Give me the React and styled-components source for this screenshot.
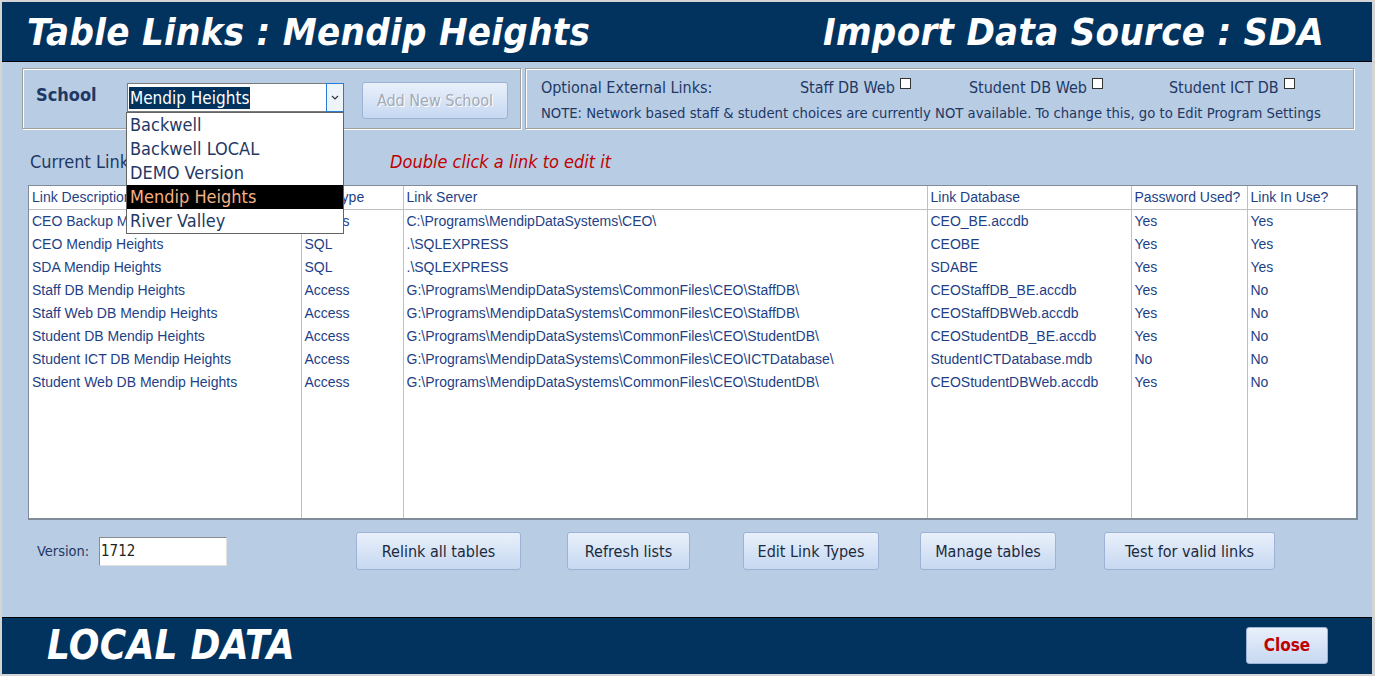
import React from "react";
import styled, { createGlobalStyle } from "styled-components";

const Global = createGlobalStyle`
  html, body { margin: 0; padding: 0; background: #ffffff; }
  * { box-sizing: border-box; }
`;

const NAVY = "#02335f";
const TEXT = "#1f3864";
const UI = `"DejaVu Sans Condensed", "DejaVu Sans", sans-serif`;
const ARIAL = `"Liberation Sans", Arial, sans-serif`;

const Window = styled.div`
  width: 1375px;
  height: 676px;
  border: 2px solid #d4d4d4;
  border-right-width: 3px;
  display: flex;
  flex-direction: column;
  background: #b8cce4;
  font-family: ${UI};
  overflow: hidden;
`;

const Band = styled.div`
  background: ${NAVY};
  height: ${(p) => p.$h}px;
  display: flex;
  align-items: center;
  justify-content: space-between;
  padding: ${(p) => p.$pad};
  border-bottom: ${(p) => (p.$top ? "1px solid #000" : "none")};
  border-top: ${(p) => (p.$top ? "none" : "1px solid #000")};
  flex-shrink: 0;
`;

const BigTitle = styled.h1`
  margin: 0;
  color: #fff;
  font-family: ${UI};
  font-weight: bold;
  font-style: italic;
  font-size: ${(p) => p.$size || 38}px;
  letter-spacing: 0.3px;
  white-space: nowrap;
`;

const Body = styled.div`
  flex: 1;
  display: flex;
  flex-direction: column;
  padding: 6px 18px 0 20px;
`;

const TopRow = styled.div`
  display: flex;
  gap: 4px;
  height: 61px;
`;

const Panel = styled.div`
  position: relative;
  width: ${(p) => p.$w}px;
  border: 1px solid #a0a0a0;
  box-shadow: inset 1px 1px 0 #ffffff, 1px 1px 0 #ffffff;
  display: flex;
  flex-direction: ${(p) => (p.$col ? "column" : "row")};
  padding: ${(p) => p.$pad};
`;

const SchoolLabel = styled.span`
  font-weight: bold;
  font-size: 18px;
  color: ${TEXT};
  width: 91px;
  padding-top: 15px;
`;

const Combo = styled.div`
  position: relative;
  width: 217px;
  height: 29px;
  margin-top: 14px;
  background: #fff;
  border: 1px solid #7a7a7a;
  display: flex;
  align-items: center;
  padding-left: 1px;
`;

const ComboValue = styled.span`
  background: ${NAVY};
  color: #fff;
  font-size: 17px;
  line-height: 22px;
  padding: 0 1px;
`;

const ComboButton = styled.div`
  position: absolute;
  right: -1px;
  top: -1px;
  width: 18px;
  height: 29px;
  border: 1px solid #2b7bd4;
  background: #eef4fb;
  display: flex;
  align-items: center;
  justify-content: center;
`;

const DropList = styled.ul`
  position: absolute;
  left: 103px;
  top: 43px;
  width: 218px;
  margin: 0;
  padding: 0;
  list-style: none;
  background: #fff;
  border: 1px solid #646464;
  z-index: 5;
`;

const DropItem = styled.li`
  height: 24px;
  line-height: 24px;
  padding-left: 3px;
  font-size: 18px;
  font-family: ${UI};
  color: ${(p) => (p.$sel ? "#f4b183" : TEXT)};
  background: ${(p) => (p.$sel ? "#000" : "transparent")};
`;

const Button = styled.button`
  font-family: ${UI};
  font-size: ${(p) => p.$size || 16}px;
  font-weight: ${(p) => (p.$bold ? "bold" : "normal")};
  color: ${(p) => p.$color || "#1b2a3d"};
  width: ${(p) => p.$w}px;
  height: ${(p) => p.$h || 38}px;
  border: 1px solid #9db3d6;
  border-radius: 3px;
  background: linear-gradient(#e9f0fb, #c6d8f1);
  padding: 0;
  margin-top: ${(p) => p.$mt || 0}px;
  cursor: pointer;
  &:disabled {
    color: #a4aab3;
    text-shadow: 1px 1px 0 #fff;
    cursor: default;
  }
`;

const OptRow = styled.div`
  display: flex;
  align-items: center;
  height: 22px;
  font-size: 16px;
  color: ${TEXT};
`;

const OptLabel = styled.span`
  width: ${(p) => p.$w}px;
  display: flex;
  align-items: center;
`;

const Check = styled.span`
  display: inline-block;
  width: 11px;
  height: 11px;
  background: #fff;
  border: 1px solid #333;
  margin-left: 5px;
  margin-top: -8px;
`;

const Note = styled.div`
  font-size: 14.7px;
  color: ${TEXT};
  margin-top: 6px;
  white-space: nowrap;
`;

const CaptionRow = styled.div`
  display: flex;
  align-items: baseline;
  margin: 22px 0 0 8px;
  height: 34px;
`;

const Caption = styled.span`
  font-size: 18px;
  color: ${TEXT};
  width: 360px;
`;

const Hint = styled.span`
  font-size: 18px;
  font-style: italic;
  color: #c00000;
`;

const TableBox = styled.div`
  margin-left: 6px;
  width: 1330px;
  height: 335px;
  background: #fff;
  border: 1px solid #7f8b99;
  border-right-width: 2px;
  border-bottom-width: 2px;
  overflow: hidden;
`;

const Grid = styled.table`
  width: 100%;
  height: 100%;
  border-collapse: collapse;
  table-layout: fixed;
  font-family: ${ARIAL};
  font-size: 14px;
  color: #1e3f86;
`;

const Th = styled.th`
  font-weight: normal;
  text-align: left;
  height: 23px;
  padding: 0 3px;
  border-left: 1px solid #c0c0c0;
  border-bottom: 1px solid #c0c0c0;
  white-space: nowrap;
  overflow: hidden;
  &:first-child { border-left: none; }
`;

const Td = styled.td`
  height: 23px;
  padding: 0 3px;
  border-left: 1px solid #c0c0c0;
  white-space: nowrap;
  overflow: hidden;
  vertical-align: middle;
  &:first-child { border-left: none; }
`;

const Filler = styled.td`
  border-left: 1px solid #c0c0c0;
  &:first-child { border-left: none; }
`;

const BottomRow = styled.div`
  display: flex;
  align-items: center;
  margin-top: 12px;
  height: 38px;
`;

const VersionLabel = styled.span`
  font-size: 14.5px;
  color: ${TEXT};
  margin-left: 15px;
  width: 62px;
`;

const VersionInput = styled.div`
  width: 128px;
  height: 29px;
  background: #fff;
  border: 1px solid #8a8a8a;
  border-bottom-color: #e0e0e0;
  border-right-color: #e0e0e0;
  font-size: 15px;
  color: #222;
  padding: 4px 1px;
  margin-right: 129px;
`;

const ButtonGroup = styled.div`
  display: flex;
`;

const columns = [
  { name: "Link Description", w: 272 },
  { name: "Link Type", w: 102 },
  { name: "Link Server", w: 524 },
  { name: "Link Database", w: 204 },
  { name: "Password Used?", w: 116 },
  { name: "Link In Use?", w: 110 },
];

const rows = [
  ["CEO Backup Mendip Heights", "Access", "C:\\Programs\\MendipDataSystems\\CEO\\", "CEO_BE.accdb", "Yes", "Yes"],
  ["CEO Mendip Heights", "SQL", ".\\SQLEXPRESS", "CEOBE", "Yes", "Yes"],
  ["SDA Mendip Heights", "SQL", ".\\SQLEXPRESS", "SDABE", "Yes", "Yes"],
  ["Staff DB Mendip Heights", "Access", "G:\\Programs\\MendipDataSystems\\CommonFiles\\CEO\\StaffDB\\", "CEOStaffDB_BE.accdb", "Yes", "No"],
  ["Staff Web DB Mendip Heights", "Access", "G:\\Programs\\MendipDataSystems\\CommonFiles\\CEO\\StaffDB\\", "CEOStaffDBWeb.accdb", "Yes", "No"],
  ["Student DB Mendip Heights", "Access", "G:\\Programs\\MendipDataSystems\\CommonFiles\\CEO\\StudentDB\\", "CEOStudentDB_BE.accdb", "Yes", "No"],
  ["Student ICT DB Mendip Heights", "Access", "G:\\Programs\\MendipDataSystems\\CommonFiles\\CEO\\ICTDatabase\\", "StudentICTDatabase.mdb", "No", "No"],
  ["Student Web DB Mendip Heights", "Access", "G:\\Programs\\MendipDataSystems\\CommonFiles\\CEO\\StudentDB\\", "CEOStudentDBWeb.accdb", "Yes", "No"],
];

const schools = ["Backwell", "Backwell LOCAL", "DEMO Version", "Mendip Heights", "River Valley"];

const actions = [
  { label: "Relink all tables", w: 165, gap: 0 },
  { label: "Refresh lists", w: 123, gap: 46 },
  { label: "Edit Link Types", w: 136, gap: 53 },
  { label: "Manage tables", w: 136, gap: 41 },
  { label: "Test for valid links", w: 171, gap: 48 },
];

export default function App() {
  return (
    <>
      <Global />
      <Window>
        <Band $h={60} $top $pad="0 48px 0 25px">
          <BigTitle>Table Links : Mendip Heights</BigTitle>
          <BigTitle>Import Data Source : SDA</BigTitle>
        </Band>

        <Body>
          <TopRow>
            <Panel $w={500} $pad="0 0 0 13px">
              <SchoolLabel>School</SchoolLabel>
              <Combo>
                <ComboValue>Mendip Heights</ComboValue>
                <ComboButton>
                  <svg width="8" height="5" viewBox="0 0 8 5">
                    <path d="M1 1 L4 4 L7 1" fill="none" stroke="#333" strokeWidth="1.2" />
                  </svg>
                </ComboButton>
              </Combo>
              <Button $w={146} $h={37} $mt={13} disabled style={{ marginLeft: 18 }}>
                Add New School
              </Button>
              <DropList>
                {schools.map((s) => (
                  <DropItem key={s} $sel={s === "Mendip Heights"}>
                    {s}
                  </DropItem>
                ))}
              </DropList>
            </Panel>

            <Panel $w={831} $col $pad="7px 0 0 15px">
              <OptRow>
                <OptLabel $w={259}>Optional External Links:</OptLabel>
                <OptLabel $w={169}>
                  Staff DB Web <Check />
                </OptLabel>
                <OptLabel $w={200}>
                  Student DB Web <Check />
                </OptLabel>
                <OptLabel $w={150}>
                  Student ICT DB <Check />
                </OptLabel>
              </OptRow>
              <Note>
                NOTE: Network based staff &amp; student choices are currently NOT available. To change this, go to Edit Program Settings
              </Note>
            </Panel>
          </TopRow>

          <CaptionRow>
            <Caption>Current Links</Caption>
            <Hint>Double click a link to edit it</Hint>
          </CaptionRow>

          <TableBox>
            <Grid>
              <colgroup>
                {columns.map((c) => (
                  <col key={c.name} style={{ width: c.w }} />
                ))}
              </colgroup>
              <thead>
                <tr>
                  {columns.map((c) => (
                    <Th key={c.name}>{c.name}</Th>
                  ))}
                </tr>
              </thead>
              <tbody>
                {rows.map((r) => (
                  <tr key={r[0]}>
                    {r.map((cell, i) => (
                      <Td key={i}>{cell}</Td>
                    ))}
                  </tr>
                ))}
                <tr>
                  {columns.map((c) => (
                    <Filler key={c.name} />
                  ))}
                </tr>
              </tbody>
            </Grid>
          </TableBox>

          <BottomRow>
            <VersionLabel>Version:</VersionLabel>
            <VersionInput>1712</VersionInput>
            <ButtonGroup>
              {actions.map((a) => (
                <Button key={a.label} $w={a.w} style={{ marginLeft: a.gap }}>
                  {a.label}
                </Button>
              ))}
            </ButtonGroup>
          </BottomRow>
        </Body>

        <Band $h={57} $pad="0 44px 2px 45px">
          <BigTitle $size={40}>LOCAL DATA</BigTitle>
          <Button $w={82} $h={37} $size={17} $bold $color="#c00000">
            Close
          </Button>
        </Band>
      </Window>
    </>
  );
}
